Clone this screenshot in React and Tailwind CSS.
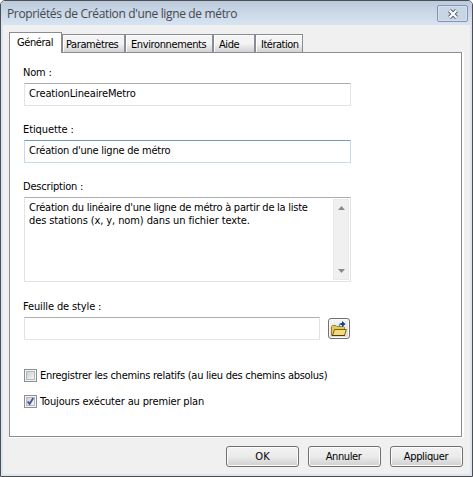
const font = "font-['DejaVu_Sans_Condensed','DejaVu_Sans',sans-serif] [font-stretch:condensed]";

function Tab({ label, className }) {
  return (
    <div className={`h-[18px] border border-b-0 border-[#898c95] bg-linear-to-b from-[#f4f4f4] from-50% to-[#d2d2d2] shadow-[inset_1px_1px_0_#fcfcfc] pt-[3px] leading-[14px] ${className}`}>
      {label}
    </div>
  );
}

function Label({ children, className }) {
  return <div className={`h-[14px] leading-[14px] ${className}`}>{children}</div>;
}

function Field({ children, className }) {
  return (
    <div className={`h-[23px] rounded-[1px] border bg-white pt-[3px] pl-[4px] leading-[14px] ${className}`}>
      {children}
    </div>
  );
}

function Check({ checked }) {
  return (
    <div className="size-[13px] shrink-0 border border-[#8e8f8f] bg-[#f4f4f4] p-px">
      <div className="size-[9px] border border-[#b5bac0] bg-linear-to-br from-[#cbcfd5] to-[#f6f6f6]">
        {checked && (
          <svg className="block size-[7px] overflow-visible" viewBox="0 0 7 7">
            <path d="M0.7 3.5 L2.6 6 L6.3 0" fill="none" stroke="#3f568f" strokeWidth="1.8" />
          </svg>
        )}
      </div>
    </div>
  );
}

function Button({ children, className }) {
  return (
    <button className={`h-[21px] rounded-[3px] border border-[#707070] bg-linear-to-b from-[#f2f2f2] via-[#ebebeb] via-50% to-[#cfcfcf] shadow-[inset_0_0_0_1px_#fbfbfb] pt-px leading-[18px] ${className}`}>
      {children}
    </button>
  );
}

export default function App() {
  return (
    <div className={`flex h-[477px] w-[473px] flex-col overflow-hidden rounded-t-[5px] border border-[#4d4e52] bg-[#dce6f3] text-[11px] text-black ${font}`}>
      <div className="flex h-[24px] shrink-0 items-start justify-between bg-linear-to-b from-[#bccbdc] to-[#d8e4f2] pr-[4px] pl-[6px]">
        <div className="pt-[4px] font-['Open_Sans',sans-serif] text-[12px] leading-[18px] tracking-[-0.35px] whitespace-nowrap text-[#45484d] [font-stretch:normal]">
          Propriétés de Création d'une ligne de métro
        </div>
        <div className="mt-[4px] flex h-[17px] w-[31px] items-center justify-center rounded-[2px] border border-[#8394b0] bg-[#c7d5e5] shadow-[inset_0_0_0_1px_#d5e0ec]">
          <svg width="12" height="10" viewBox="0 0 12 10">
            <path d="M2.5 1.5 L9.5 8.5 M9.5 1.5 L2.5 8.5" stroke="#535966" strokeWidth="4" />
            <path d="M2.5 1.5 L9.5 8.5 M9.5 1.5 L2.5 8.5" stroke="#fff" strokeWidth="2.3" />
          </svg>
        </div>
      </div>

      <div className="mx-[2px] mb-[2px] flex flex-1 flex-col bg-[#f0f0f0]">
        <div className="flex h-[27px] items-end pl-[6px] whitespace-nowrap">
          <div className="relative z-10 -mb-px h-[21px] w-[53px] border border-b-0 border-[#898c95] bg-white pt-[3px] pl-[7px] leading-[14px] tracking-[-0.43px]">
            Général
          </div>
          <Tab label="Paramètres" className="w-[63px] pl-[3px] tracking-[-0.4px]" />
          <Tab label="Environnements" className="w-[88px] pl-[5px] tracking-[-0.38px]" />
          <Tab label="Aide" className="w-[42px] pl-[5px] tracking-[-0.4px]" />
          <Tab label="Itération" className="w-[48px] pl-[5px] tracking-[-0.5px]" />
        </div>

        <div className="ml-[6px] h-[386px] w-[455px] shrink-0 bg-white">
          <div className="flex h-[385px] w-[453px] flex-col border border-[#898c95] bg-white pl-[14px]">
            <Label className="mt-[13px] -ml-px tracking-[-0.2px]">Nom :</Label>
            <Field className="mt-[3px] w-[327px] border-[#e2e3ea] border-t-[#abadb3] tracking-[-0.14px]">CreationLineaireMetro</Field>
            <Label className="mt-[17px] -ml-px tracking-[-0.1px]">Etiquette :</Label>
            <Field className="mt-[3px] w-[327px] border-[#c5daed] border-t-[#6c9dc1] tracking-[-0.23px]">Création d'une ligne de métro</Field>
            <Label className="mt-[17px] -ml-px tracking-[-0.2px]">Description :</Label>
            <div className="mt-[3px] flex h-[85px] w-[327px] justify-between rounded-[1px] border border-[#e2e3ea] border-t-[#abadb3] p-px">
              <div className="pt-[2px] pl-[3px] leading-[13px] tracking-[-0.25px] whitespace-nowrap">
                Création du linéaire d'une ligne de métro à partir de la liste
                <br />
                <span className="tracking-[-0.1px]">des stations (x, y, nom) dans un fichier texte.</span>
              </div>
              <div className="flex w-[16px] flex-col items-center justify-between border border-[#e9e9e9] bg-[#f0f0f0] py-[6px]">
                <svg width="7" height="4" viewBox="0 0 7 4"><path d="M0 4 L3.5 0 L7 4 Z" fill="#8a8a8a" /></svg>
                <svg width="7" height="4" viewBox="0 0 7 4"><path d="M0 0 L3.5 4 L7 0 Z" fill="#8a8a8a" /></svg>
              </div>
            </div>
            <Label className="mt-[18px] -ml-px tracking-[-0.13px]">Feuille de style :</Label>
            <div className="mt-[3px] flex gap-[8px]">
              <Field className="w-[296px] border-[#e2e3ea] border-t-[#abadb3]" />
              <button className="mt-px flex h-[21px] w-[22px] items-center justify-center rounded-[3px] border border-[#707070] bg-linear-to-b from-[#f4f4f4] to-[#dcdcdc] shadow-[inset_0_0_0_1px_#fbfbfb]">
                <svg className="mt-px" width="16" height="16" viewBox="0 0 16 16">
                  <path d="M0.5 14.5 V5.5 L1.5 4.5 H5 L6 5.5 H12.5 L13.5 6.5 V14.5 Z" fill="#e3c75c" stroke="#9c8030" />
                  <path d="M1.5 14.5 L3.5 8.5 H15.4 L13.5 14.5 Z" fill="#f3dc78" stroke="#7d6318" />
                  <path d="M1 14.5 H14" stroke="#4f3c0a" />
                  <path d="M8.5 5.5 V3.5 L9.5 2.5" fill="none" stroke="#3aa3d8" strokeWidth="1.4" />
                  <path d="M9.5 3 H12" stroke="#143f80" strokeWidth="2" />
                  <path d="M11 0 L14.5 3 L11 6 Z" fill="#143f80" />
                </svg>
              </button>
            </div>
            <div className="mt-[29px] flex h-[13px] gap-[3px] leading-[13px] whitespace-nowrap">
              <Check />
              <span className="tracking-[-0.27px]">Enregistrer les chemins relatifs (au lieu des chemins absolus)</span>
            </div>
            <div className="mt-[13px] flex h-[13px] gap-[3px] leading-[13px] whitespace-nowrap">
              <Check checked />
              <span className="tracking-[-0.15px]">Toujours exécuter au premier plan</span>
            </div>
          </div>
        </div>

        <div className="mt-[8px] flex justify-end gap-[9px] pr-[7px]">
          <Button className="w-[73px]">OK</Button>
          <Button className="w-[73px] pr-[2px] tracking-[-0.4px]">Annuler</Button>
          <Button className="w-[73px] pr-px tracking-[-0.35px]">Appliquer</Button>
        </div>
      </div>
    </div>
  );
}
